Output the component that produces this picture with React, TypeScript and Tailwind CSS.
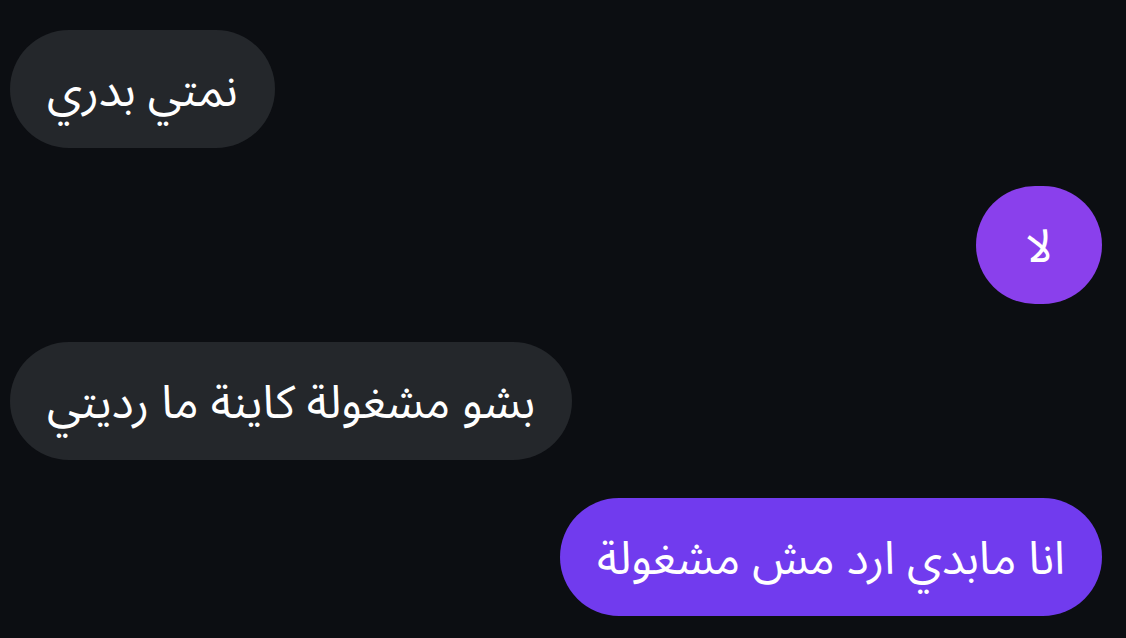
import React from "react";

const msgs = [
  { text: "نمتي بدري", me: false },
  { text: "لا", me: true, bg: "bg-[#8a40ec]" },
  { text: "بشو مشغولة كاينة ما رديتي", me: false },
  { text: "انا مابدي ارد مش مشغولة", me: true, bg: "bg-[#713bee]" },
];

export default function App() {
  return (
    <div className="w-[1126px] h-[638px] bg-[#0c0e12] pt-[30px] pl-[10px] pr-[24px] flex flex-col gap-[38px] overflow-hidden" style={{ fontFamily: '"Noto Sans Arabic", "Noto Sans", sans-serif' }}>
      {msgs.map((m, i) => (
        <div key={i} className={`flex ${m.me ? "justify-end" : "justify-start"}`}>
          <div
            dir="rtl"
            className={`h-[118px] min-w-[126px] rounded-full flex items-center justify-center px-[37px] pt-[6px] text-[46px] leading-none text-white ${m.me ? m.bg : "bg-[#24272b]"}`}
          >
            {m.text}
          </div>
        </div>
      ))}
    </div>
  );
}
